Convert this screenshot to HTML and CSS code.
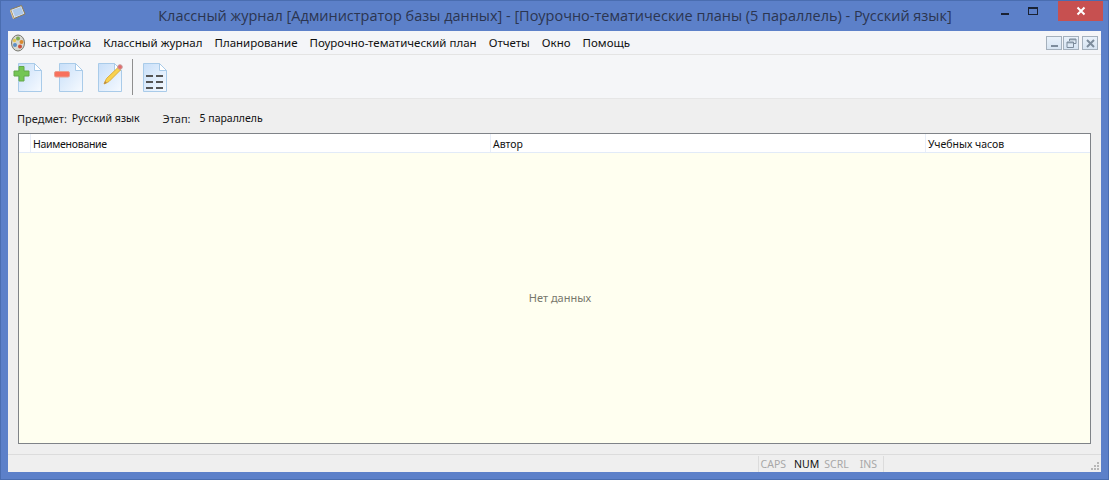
FILE: index.html
```html
<!DOCTYPE html>
<html lang="ru">
<head>
<meta charset="utf-8">
<title>Классный журнал</title>
<link rel="stylesheet" href="styles.css">
</head>
<body>
<div class="window">
  <header class="titlebar">
    <svg class="app-icon" width="18" height="18" viewBox="0 0 18 18"><path d="M1.500 5.500 12.500 1.500 16 10 5 14.500Z" fill="#dfe6ee" stroke="#8a7a55"/><path d="M3.500 6 12 3 14.500 9.500 6 12.800Z" fill="#a9c6ea"/><path d="M1.500 5.500 5 14.500 4 15 1 7Z" fill="#e8c890"/></svg>
    <div class="title">Классный журнал [Администратор базы данных] - [Поурочно-тематические планы (5 параллель) - Русский язык]</div>
    <div class="caption-btns">
      <span class="cap-btn"><i class="min-glyph"></i></span>
      <span class="cap-btn"><i class="max-glyph"></i></span>
      <span class="cap-close"><svg width="10" height="10" viewBox="0 0 10 10"><path d="M1.500 1.500 8.500 8.500M8.500 1.500 1.500 8.500" stroke="#fff" stroke-width="2"/></svg></span>
    </div>
  </header>
  <div class="client">
    <nav class="menubar">
      <svg class="menu-logo" width="16" height="18" viewBox="0 0 16 18"><ellipse cx="8" cy="9" rx="6.500" ry="8" fill="#d8d8d0" stroke="#77776f"/><circle cx="8" cy="4.500" r="2" fill="#7cab52"/><circle cx="11.500" cy="8" r="2" fill="#d9892f"/><circle cx="10" cy="12.500" r="2" fill="#c8503c"/><circle cx="5" cy="11" r="2" fill="#5d8fc6"/><circle cx="4.500" cy="6.500" r="1.700" fill="#e6c64c"/></svg>
      <span class="menu-item">Настройка</span>
      <span class="menu-item">Классный журнал</span>
      <span class="menu-item">Планирование</span>
      <span class="menu-item">Поурочно-тематический план</span>
      <span class="menu-item">Отчеты</span>
      <span class="menu-item">Окно</span>
      <span class="menu-item">Помощь</span>
      <div class="mdi-btns">
        <span class="mdi-btn"><svg width="11" height="11" viewBox="0 0 11 11"><rect x="2" y="7" width="7" height="2" fill="#7d8c9c"/></svg></span>
        <span class="mdi-btn"><svg width="11" height="11" viewBox="0 0 11 11"><path d="M3.500 3V1H10V5.500H8M1 4H7.500V9.500H1Z M1 4.800H7.500M3.500 1.800H10" fill="none" stroke="#7d8c9c"/></svg></span>
        <span class="mdi-btn"><svg width="11" height="11" viewBox="0 0 11 11"><path d="M2 2 9 9M9 2 2 9" stroke="#7d8c9c" stroke-width="2"/></svg></span>
      </div>
    </nav>
    <div class="toolbar">
      <svg class="tool tool-add" width="32" height="32" viewBox="0 0 32 32"><use href="#page"/><path d="M6 5.500H11V10H16V15H11V20H6V15H1V10H6Z" fill="#74c653" stroke="#64a84a" stroke-linejoin="round"/></svg>
      <svg class="tool tool-del" width="32" height="32" viewBox="0 0 32 32"><use href="#page"/><rect x="0.500" y="10.500" width="15" height="5.500" rx="1.500" fill="#f8705c" stroke="#e8a090"/></svg>
      <svg class="tool tool-edit" width="32" height="32" viewBox="0 0 32 32"><use href="#page"/><path d="M11 23 13.500 17.500 25 6.500 27.500 9 16 20.500Z" fill="#f9d24e" stroke="#dcae3e"/><path d="M11 23 12 20 14 22Z" fill="#b98a46"/><circle cx="27" cy="6" r="2.300" fill="#e56a6a" stroke="#c8a0a0"/></svg>
      <div class="tool-sep"></div>
      <svg class="tool" width="32" height="32" viewBox="0 0 32 32">
        <defs>
          <linearGradient id="pg" x1="0" y1="0" x2="1" y2="1"><stop offset="0" stop-color="#c8dff9"/><stop offset="1" stop-color="#f6faff"/></linearGradient>
          <g id="page"><path d="M5.500 2.500H21.500L28.500 9.500V30.500H5.500Z" fill="url(#pg)" stroke="#a9cbe9"/><path d="M21.500 2.500V9.500H28.500Z" fill="#fff" stroke="#a9cbe9"/></g>
        </defs>
        <use href="#page"/>
        <path d="M8 14H15V16H8ZM18 14H25V16H18ZM8 20H15V22H8ZM18 20H25V22H18ZM8 26H15V28H8ZM18 26H25V28H18Z" fill="#555"/>
      </svg>
    </div>
    <div class="filters">
      <span class="f-label">Предмет:</span><span class="f-value subject">Русский язык</span>
      <span class="f-label stage">Этап:</span><span class="f-value">5 параллель</span>
    </div>
    <div class="grid">
      <div class="grid-head">
        <div class="h-ind"></div>
        <div class="h-cell c-name">Наименование</div>
        <div class="h-cell c-author">Автор</div>
        <div class="h-cell c-hours">Учебных часов</div>
      </div>
      <div class="grid-body">Нет данных</div>
    </div>
    <footer class="statusbar">
      <div class="st-panels">
        <span class="st off">CAPS</span>
        <span class="st on">NUM</span>
        <span class="st off scrl">SCRL</span>
        <span class="st off ins">INS</span>
      </div>
      <svg class="grip" width="10" height="10" viewBox="0 0 10 10"><path d="M7 1h2v2H7ZM4 4h2v2H4ZM7 4h2v2H7ZM1 7h2v2H1ZM4 7h2v2H4ZM7 7h2v2H7Z" fill="#b8b8b8"/></svg>
    </footer>
  </div>
</div>
</body>
</html>
```
FILE: styles.css
```css
* { box-sizing: border-box; }
html, body { margin: 0; padding: 0; }
body { width: 1109px; height: 480px; overflow: hidden; font-family: "Noto Sans", "Open Sans", sans-serif; font-size: 11px; color: #111; }
.window { width: 1109px; height: 480px; background: #5c80c9; border: 1px solid #4a6db0; display: flex; flex-direction: column; }
.titlebar { height: 30px; flex: none; display: flex; align-items: flex-start; position: relative; }
.app-icon { margin: 3px 0 0 8px; flex: none; }
.title { position: absolute; left: 0; right: 0; top: 4px; text-align: center; font-size: 14.470px; line-height: 22px; color: #2b3550; font-family: "Open Sans", "Noto Sans", sans-serif; padding-left: 1px; white-space: nowrap; }
.caption-btns { margin-left: auto; margin-right: 5px; display: flex; position: relative; }
.cap-btn { width: 27px; height: 20px; display: block; position: relative; }
.min-glyph { position: absolute; left: 0; top: 12px; width: 8px; height: 2px; background: #1a2233; }
.max-glyph { position: absolute; left: 0; top: 6px; width: 10px; height: 8px; border: 1px solid #1a2233; border-top-width: 2px; }
.cap-close { width: 45px; height: 20px; margin-left: 3px; background: #c75050; display: flex; align-items: center; justify-content: center; }
.client { flex: 1; margin: 0 7px 7px; background: #efefef; display: flex; flex-direction: column; min-height: 0; }
.menubar { height: 24px; flex: none; display: flex; align-items: center; padding: 1px 0 0 2px; background: #f4f5f8; border-bottom: 1px solid #e4e4e4; }
.menu-logo { flex: none; }
.menu-item { padding: 0 6px; line-height: 16px; font-size: 11.500px; white-space: nowrap; }
.mdi-btns { margin-left: auto; margin-right: 3px; display: flex; gap: 1px; }
.mdi-btn { width: 16px; height: 14px; border: 1px solid #a4b0bc; background: linear-gradient(#e9f1fa, #d7e4f2); display: flex; align-items: center; justify-content: center; }
.mdi-btn:last-child { margin-left: 2px; }
.toolbar { height: 44px; flex: none; display: flex; align-items: center; background: #f5f6f8; border-bottom: 1px solid #e6e6e6; padding-left: 5px; }
.tool { flex: none; }
.tool-add { margin-right: 9px; }
.tool-del { margin-right: 7px; }
.tool-edit { margin-right: 7px; }
.tool-sep { width: 1px; height: 36px; background: #8f8f8f; margin-right: 5px; }
.filters { height: 34px; flex: none; display: flex; align-items: center; padding: 4px 0 0 9px; }
.f-label { margin-right: 5px; color: #222; }
.stage { margin-right: 9px; }
.f-value { color: #111; font-size: 10.500px; }
.subject { margin-right: 23px; }
.grid { height: 311px; flex: none; margin: 0 10px 0 10px; border: 1px solid #7f8388; display: flex; flex-direction: column; background: #fffff0; }
.grid-head { height: 19px; flex: none; display: flex; background: #fff; border-bottom: 1px solid #e2ebf8; font-size: 10.500px; }
.h-ind { width: 12px; border-right: 1px solid #e8eef8; }
.h-cell { padding-left: 2px; line-height: 20px; border-right: 1px solid #e8eef8; white-space: nowrap; }
.c-name { width: 460px; letter-spacing: -0.280px; }
.c-author { width: 435px; }
.c-hours { flex: 1; border-right: 0; }
.grid-body { flex: 1; display: flex; align-items: center; justify-content: center; color: #77776c; padding: 0 0 1px 11px; }
.statusbar { flex: 1; display: flex; align-items: center; justify-content: flex-end; margin-top: 10px; border-top: 1px solid #dcdcdc; position: relative; font-size: 10.500px; }
.st-panels { height: 16px; display: flex; align-items: center; margin-right: 217px; border-left: 1px solid #dcdcdc; border-right: 1px solid #dcdcdc; padding: 0 6px 0 2px; }
.st { line-height: 16px; }
.off { color: #a8a8a8; }
.on { color: #111; margin-left: 8px; }
.scrl { margin-left: 5px; }
.ins { margin-left: 11px; }
.grip { position: absolute; right: 1px; bottom: 1px; }
```
